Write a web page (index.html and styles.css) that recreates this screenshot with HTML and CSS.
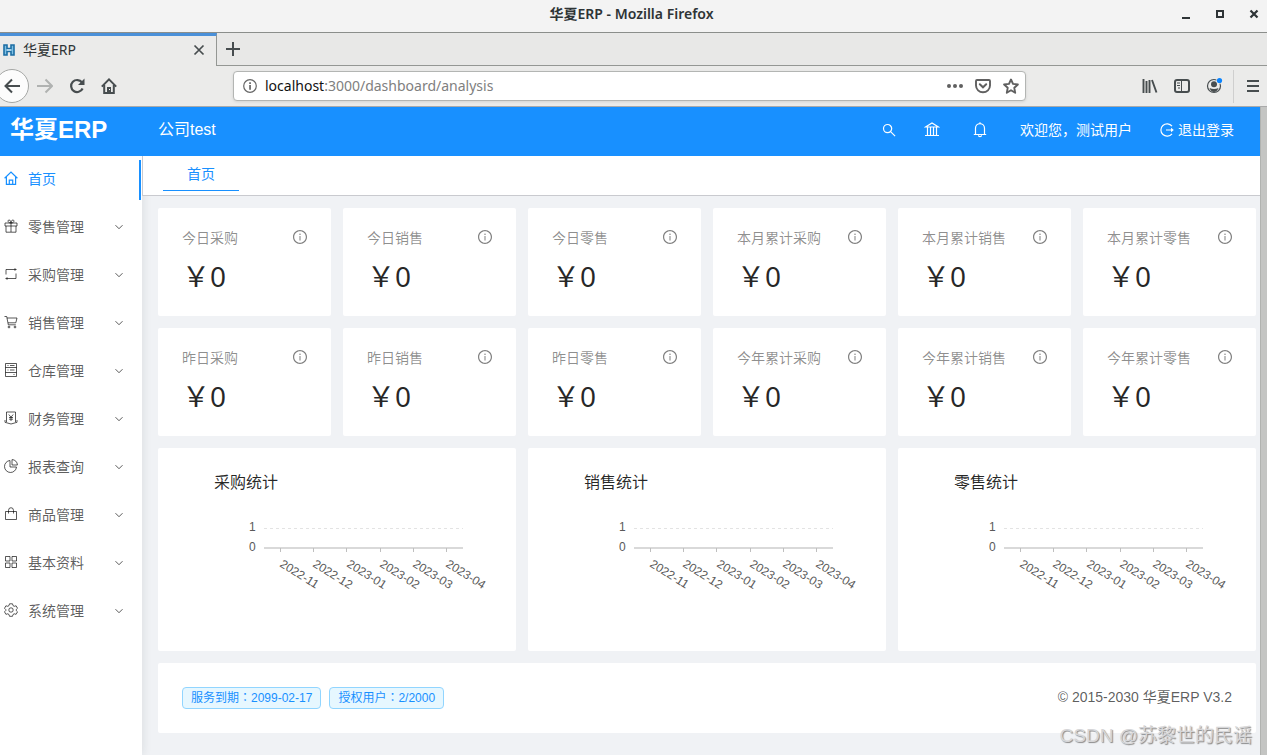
FILE: index.html
```html
<!DOCTYPE html>
<html lang="zh-CN">
<head>
<meta charset="utf-8">
<meta name="viewport" content="width=device-width, initial-scale=1">
<title>华夏ERP</title>
<link rel="stylesheet" href="styles.css">
</head>
<body>
<svg class="defs" aria-hidden="true">
  <symbol id="i-info" viewBox="64 64 896 896"><path fill="currentColor" d="M512 64C264.6 64 64 264.6 64 512s200.600 448 448 448 448-200.600 448-448S759.400 64 512 64zm0 820c-205.400 0-372-166.600-372-372s166.600-372 372-372 372 166.600 372 372-166.600 372-372 372z"/><path fill="currentColor" d="M464 336a48 48 0 1 0 96 0 48 48 0 1 0-96 0zm72 112h-48c-4.400 0-8 3.600-8 8v272c0 4.400 3.600 8 8 8h48c4.400 0 8-3.600 8-8V456c0-4.400-3.600-8-8-8z"/></symbol>
  <symbol id="i-down" viewBox="0 0 10 10"><path class="line" d="M1.500 3.200 5 6.700 8.500 3.200"/></symbol>
</svg>

<header class="titlebar">
  <span class="titlebar-text">华夏ERP - Mozilla Firefox</span>
  <div class="window-buttons">
    <button aria-label="Minimize"><svg width="10" height="10" viewBox="0 0 10 10"><path d="M1 8h8v2H1z" fill="#2e3436"/></svg></button>
    <button aria-label="Maximize"><svg width="10" height="10" viewBox="0 0 10 10"><path d="M2 2h6v6H2z" fill="none" stroke="#2e3436" stroke-width="2"/></svg></button>
    <button aria-label="Close"><svg width="10" height="10" viewBox="0 0 10 10"><path d="m1.500 1.500 7 7m0-7-7 7" stroke="#2e3436" stroke-width="2.200"/></svg></button>
  </div>
</header>

<div class="tabstrip">
  <div class="browser-tab">
    <svg width="12" height="12" viewBox="0 0 12 12"><path d="M1 1h3v3.500h4V1h3v10H8V7.500H4V11H1z" fill="#7fc0e4" stroke="#1c6ea4" stroke-width="1.600"/><path d="M4 6h4" stroke="#e8f4fb"/></svg>
    <span class="browser-tab-name">华夏ERP</span>
    <button aria-label="Close tab"><svg width="12" height="12" viewBox="0 0 12 12"><path d="m1.500 1.500 9 9m0-9-9 9" stroke="#474d4f" stroke-width="1.700"/></svg></button>
  </div>
  <button class="new-tab" aria-label="New tab"><svg width="14" height="14" viewBox="0 0 14 14"><path d="M7 0v14M0 7h14" stroke="#474d4f" stroke-width="2"/></svg></button>
</div>

<nav class="toolbar">
  <button class="back" aria-label="Back"><svg width="18" height="16" viewBox="0 0 18 16"><path d="M17 8H3M9 1.500 2.500 8 9 14.500" fill="none" stroke="#474d4f" stroke-width="2"/></svg></button>
  <button class="tool" aria-label="Forward"><svg width="16" height="16" viewBox="0 0 16 16"><path d="M0 8h14M8.500 1.500 15 8l-6.500 6.500" fill="none" stroke="#b0b2b1" stroke-width="2"/></svg></button>
  <button class="tool" aria-label="Reload"><svg width="16" height="16" viewBox="0 0 16 16"><path d="M13.600 10.500A6 6 0 1 1 13 4.500" fill="none" stroke="#474d4f" stroke-width="2.200"/><path d="M15.500 0.500v6.500H9z" fill="#474d4f"/></svg></button>
  <button class="tool" aria-label="Home"><svg width="16" height="16" viewBox="0 0 16 16"><path d="M.8 8.600 8 1.400l7.200 7.200" fill="none" stroke="#474d4f" stroke-width="2"/><path d="M3.200 7v7.900h9.600V7" fill="none" stroke="#474d4f" stroke-width="2"/><path d="M6 9h4v6H6z" fill="#474d4f"/><path d="M8 11h1v1H8z" fill="#fff"/></svg></button>
  <div class="urlbar">
    <svg width="14" height="14" viewBox="0 0 14 14"><circle cx="7" cy="7" r="6.300" fill="none" stroke="#666" stroke-width="1.200"/><path d="M6.200 3.200h1.700v1.700H6.200zM6.200 6h1.700v4.800H6.200z" fill="#666"/></svg>
    <span class="url"><b>localhost</b>:3000/dashboard/analysis</span>
    <button aria-label="Page actions"><svg width="16" height="16" viewBox="0 0 16 16"><g fill="#606060"><circle cx="2" cy="8" r="2"/><circle cx="8" cy="8" r="2"/><circle cx="14" cy="8" r="2"/></g></svg></button>
    <button aria-label="Save to Pocket"><svg width="16" height="16" viewBox="0 0 16 16"><path d="M2 2h12q1 0 1 1v4.500a7 6.800 0 0 1-14 0V3q0-1 1-1z" fill="none" stroke="#606060" stroke-width="1.900"/><path d="m4.800 6.300 3.200 3 3.200-3" fill="none" stroke="#606060" stroke-width="2" stroke-linecap="round"/></svg></button>
    <button aria-label="Bookmark"><svg width="16" height="16" viewBox="0 0 16 16"><path d="m8 1.500 2 4.400 4.900.6-3.600 3.300.9 5L8 12.300l-4.200 2.500.9-5L1.100 6.500 6 5.900z" fill="none" stroke="#606060" stroke-width="1.900" stroke-linejoin="round"/></svg></button>
  </div>
  <button class="tool" aria-label="Library"><svg width="16" height="16" viewBox="0 0 16 16"><path d="M1.500 1v14M4.500 3v12M7.500 2v13M10 2l4.500 12.500" stroke="#474d4f" stroke-width="1.900"/></svg></button>
  <button class="tool" aria-label="Sidebar"><svg width="16" height="16" viewBox="0 0 16 16"><rect x="1" y="2" width="14" height="12" rx="2" fill="none" stroke="#474d4f" stroke-width="2"/><path d="M7.500 2v12M3 5h3M3 7.500h3M4 10h2" stroke="#474d4f"/></svg></button>
  <button class="tool" aria-label="Account"><svg width="18" height="18" viewBox="0 0 18 18"><circle cx="9" cy="9" r="6.500" fill="none" stroke="#474d4f" stroke-width="1.200"/><circle cx="9" cy="7.200" r="3" fill="#474d4f"/><path d="M4.500 11q4.500 2 9 0-1.500 4-4.500 4t-4.500-4z" fill="#474d4f"/><circle cx="14.500" cy="3.500" r="3.200" fill="#ebebea"/><circle cx="14.500" cy="3.500" r="2.600" fill="#0a84ff"/></svg></button>
  <span class="tool-divider"></span>
  <button class="menu-button" aria-label="Menu"><svg width="12" height="12" viewBox="0 0 12 12"><path d="M0 1h12M0 6h12M0 11h12" stroke="#474d4f" stroke-width="2"/></svg></button>
</nav>

<div class="viewport">
  <div class="app">
    <header class="app-header">
      <h1>华夏ERP</h1>
      <span class="company">公司test</span>
      <div class="header-actions">
        <button aria-label="搜索"><svg width="14" height="14" viewBox="0 0 14 14"><circle class="line" cx="5.600" cy="5.600" r="4.100"/><path class="line" d="m8.600 8.600 4.500 4.500"/></svg></button>
        <button aria-label="机构"><svg width="16" height="16" viewBox="0 0 16 16"><path class="line" d="M1.500 5 8 1l6.500 4zM3.500 5v8M6.500 5v8M9.500 5v8M12.500 5v8M1 13.500h14"/></svg></button>
        <button aria-label="通知"><svg width="24" height="16" viewBox="0 0 24 16"><path class="line" d="M12 .2v1.300M7.500 12.500V6.300a4.500 4.700 0 0 1 9 0v6.200M5.800 12.500h12.400M10.500 13.200a1.500 1.500 0 0 0 3 0"/></svg></button>
        <span>欢迎您，测试用户</span>
        <a href="#logout"><svg width="14" height="14" viewBox="0 0 14 14"><path class="line" d="M12 3.200A6.200 6.200 0 1 0 12 10.800M6 7h6"/><path d="M11 4.800 13.800 7 11 9.200z" fill="currentColor"/></svg>退出登录</a>
      </div>
    </header>

    <div class="app-body">
      <aside class="sidebar">
        <a class="item active" href="#home"><svg class="item-icon" viewBox="0 0 14 14"><path class="line" d="M.6 7.200 7 1l6.400 6.200M2.400 6v7.300h9.200V6M5.300 13V9.200h3.400V13"/></svg><span>首页</span></a>
        <a class="item" href="#retail"><svg class="item-icon" viewBox="0 0 14 14"><path class="line" d="M1 4h12v3H1zM2 7v6.200h10V7M7 4v9M7 4C3.500 4 3.500 1 5 1s2 1.500 2 3c0-1.500.5-3 2-3s1.500 3-2 3"/></svg><span>零售管理</span><svg class="arrow"><use href="#i-down"/></svg></a>
        <a class="item" href="#purchase"><svg class="item-icon" viewBox="0 0 14 14"><path class="line" d="M2 7.500v-5h9.500M12 6.500v5H2.500"/><path fill="currentColor" d="m10.500 1 2.500 1.500L10.500 4zM3.500 10v3L1 11.500z"/></svg><span>采购管理</span><svg class="arrow"><use href="#i-down"/></svg></a>
        <a class="item" href="#sale"><svg class="item-icon" viewBox="0 0 14 14"><path class="line" d="M.5 1.500h2.200l1.600 8.300h7.500M3 3h10l-1.200 4.800H4"/><circle class="line" cx="5" cy="12" r=".9"/><circle class="line" cx="11" cy="12" r=".9"/></svg><span>销售管理</span><svg class="arrow"><use href="#i-down"/></svg></a>
        <a class="item" href="#stock"><svg class="item-icon" viewBox="0 0 14 14"><path class="line" d="M1.500.5h11v13h-11zM1.500 4.500h11M1.500 9.500h11M6 2.500h4.500M6 7h4.500M3.500 2.500h1M3.500 7h1M9.500 11.500h1"/></svg><span>仓库管理</span><svg class="arrow"><use href="#i-down"/></svg></a>
        <a class="item" href="#finance"><svg class="item-icon" viewBox="0 0 14 14"><path class="line" d="M2.500 11V1h9v10M1 9v2.300L7 13l6-1.700V9M4.800 3.500 7 6.200l2.200-2.700M7 6.200V10M5 6.500h4M5 8.200h4"/></svg><span>财务管理</span><svg class="arrow"><use href="#i-down"/></svg></a>
        <a class="item" href="#report"><svg class="item-icon" viewBox="0 0 14 14"><path class="line" d="M6 1.500a6 6 0 1 0 6.500 6.500H6zM8 .6V6h5.400A5.400 5.400 0 0 0 8 .6z"/></svg><span>报表查询</span><svg class="arrow"><use href="#i-down"/></svg></a>
        <a class="item" href="#goods"><svg class="item-icon" viewBox="0 0 14 14"><path class="line" d="M1.500 4.500h11v8h-11zM4.500 6.500V3.500a2.500 2.800 0 0 1 5 0v3"/></svg><span>商品管理</span><svg class="arrow"><use href="#i-down"/></svg></a>
        <a class="item" href="#basic"><svg class="item-icon" viewBox="0 0 14 14"><path class="line" d="M1.500 1.500H6V6H1.500zM8 1.500h4.500V6H8zM1.500 8H6v4.500H1.500zM8 8h4.500v4.500H8z"/></svg><span>基本资料</span><svg class="arrow"><use href="#i-down"/></svg></a>
        <a class="item" href="#system"><svg class="item-icon" viewBox="0 0 14 14"><path class="line" d="M5.500.8h3l.5 1.800 1.200.7 1.900-.5 1.400 2.500L12.200 6.600v.9l1.300 1.300-1.400 2.500-1.900-.5-1.200.7-.5 1.800h-3L5 11.500l-1.200-.7-1.900.5L.5 8.800l1.300-1.300v-.9L.5 5.300l1.400-2.500 1.900.5L5 2.600z"/><circle class="line" cx="7" cy="7" r="2.200"/></svg><span>系统管理</span><svg class="arrow"><use href="#i-down"/></svg></a>
      </aside>

      <div class="content">
        <nav class="page-tabs"><a href="#home">首页</a></nav>
        <main>
          <section class="stats">
            <article class="card stat"><h2>今日采购</h2><svg class="info"><use href="#i-info"/></svg><p>￥0</p></article>
            <article class="card stat"><h2>今日销售</h2><svg class="info"><use href="#i-info"/></svg><p>￥0</p></article>
            <article class="card stat"><h2>今日零售</h2><svg class="info"><use href="#i-info"/></svg><p>￥0</p></article>
            <article class="card stat"><h2>本月累计采购</h2><svg class="info"><use href="#i-info"/></svg><p>￥0</p></article>
            <article class="card stat"><h2>本月累计销售</h2><svg class="info"><use href="#i-info"/></svg><p>￥0</p></article>
            <article class="card stat"><h2>本月累计零售</h2><svg class="info"><use href="#i-info"/></svg><p>￥0</p></article>
            <article class="card stat"><h2>昨日采购</h2><svg class="info"><use href="#i-info"/></svg><p>￥0</p></article>
            <article class="card stat"><h2>昨日销售</h2><svg class="info"><use href="#i-info"/></svg><p>￥0</p></article>
            <article class="card stat"><h2>昨日零售</h2><svg class="info"><use href="#i-info"/></svg><p>￥0</p></article>
            <article class="card stat"><h2>今年累计采购</h2><svg class="info"><use href="#i-info"/></svg><p>￥0</p></article>
            <article class="card stat"><h2>今年累计销售</h2><svg class="info"><use href="#i-info"/></svg><p>￥0</p></article>
            <article class="card stat"><h2>今年累计零售</h2><svg class="info"><use href="#i-info"/></svg><p>￥0</p></article>
          </section>

          <section class="charts">
            <article class="card chart">
              <h2>采购统计</h2>
              <svg viewBox="0 0 310 119">
                <path class="grid" d="M82 20.500h199"/><path class="axis" d="M82 40h199"/>
                <path class="tick" d="M98.500 40v4M131.500 40v4M164.500 40v4M198.500 40v4M231.500 40v4M264.500 40v4"/>
                <text x="67" y="23">1</text><text x="67" y="43">0</text>
                <text transform="translate(97 58) rotate(32)">2022-11</text><text transform="translate(130 58) rotate(32)">2022-12</text><text transform="translate(164 58) rotate(32)">2023-01</text><text transform="translate(197 58) rotate(32)">2023-02</text><text transform="translate(230 58) rotate(32)">2023-03</text><text transform="translate(263 58) rotate(32)">2023-04</text>
              </svg>
            </article>
            <article class="card chart">
              <h2>销售统计</h2>
              <svg viewBox="0 0 310 119">
                <path class="grid" d="M82 20.500h199"/><path class="axis" d="M82 40h199"/>
                <path class="tick" d="M98.500 40v4M131.500 40v4M164.500 40v4M198.500 40v4M231.500 40v4M264.500 40v4"/>
                <text x="67" y="23">1</text><text x="67" y="43">0</text>
                <text transform="translate(97 58) rotate(32)">2022-11</text><text transform="translate(130 58) rotate(32)">2022-12</text><text transform="translate(164 58) rotate(32)">2023-01</text><text transform="translate(197 58) rotate(32)">2023-02</text><text transform="translate(230 58) rotate(32)">2023-03</text><text transform="translate(263 58) rotate(32)">2023-04</text>
              </svg>
            </article>
            <article class="card chart">
              <h2>零售统计</h2>
              <svg viewBox="0 0 310 119">
                <path class="grid" d="M82 20.500h199"/><path class="axis" d="M82 40h199"/>
                <path class="tick" d="M98.500 40v4M131.500 40v4M164.500 40v4M198.500 40v4M231.500 40v4M264.500 40v4"/>
                <text x="67" y="23">1</text><text x="67" y="43">0</text>
                <text transform="translate(97 58) rotate(32)">2022-11</text><text transform="translate(130 58) rotate(32)">2022-12</text><text transform="translate(164 58) rotate(32)">2023-01</text><text transform="translate(197 58) rotate(32)">2023-02</text><text transform="translate(230 58) rotate(32)">2023-03</text><text transform="translate(263 58) rotate(32)">2023-04</text>
              </svg>
            </article>
          </section>

          <footer class="card license">
            <span class="tag" lang="zh-TW">服务到期：2099-02-17</span>
            <span class="tag" lang="zh-TW">授权用户：2/2000</span>
            <span class="copyright">© 2015-2030 华夏ERP V3.2</span>
          </footer>
        </main>
      </div>
    </div>
  </div>
  <div class="scroll-track"></div>
</div>
<div class="watermark">CSDN @苏黎世的民谣</div>
</body>
</html>
```
FILE: styles.css
```css
* { box-sizing: border-box; }

body {
  display: flex;
  flex-direction: column;
  min-height: 100vh;
  margin: 0;
  overflow: hidden;
  color: rgba(0, 0, 0, .65);
  background: #f0f2f5;
  font: 14px/22px "Liberation Sans", "Noto Sans CJK SC", sans-serif;
}

h1, h2, p { margin: 0; font-weight: 400; }
a { color: inherit; text-decoration: none; }
svg { display: block; flex: none; }
.defs { position: absolute; width: 0; height: 0; }
.line { fill: none; stroke: currentColor; stroke-width: 1; }

button {
  display: flex;
  align-items: center;
  justify-content: center;
  padding: 0;
  color: inherit;
  background: none;
  border: 0;
}

/* Browser window */
.titlebar {
  display: grid;
  grid-template-columns: 1fr auto 1fr;
  align-items: center;
  height: 33px;
  padding: 0 8px 4px 4px;
  color: #2e3436;
  background: #f3f3f3;
  border-bottom: 1px solid #8b8e8b;
  font: 600 14px/20px "Noto Sans", "Noto Sans CJK SC", sans-serif;
}
.titlebar-text { grid-column: 2; }
.window-buttons { display: flex; justify-content: flex-end; gap: 24px; }

.tabstrip {
  display: flex;
  height: 33px;
  background: #e8e8e7;
  border-bottom: 1px solid #949794;
}
.browser-tab {
  display: flex;
  align-items: center;
  gap: 8px;
  width: 217px;
  height: 33px;
  padding: 0 11px 2px 3px;
  color: #2e3436;
  background: #ebebea;
  border-top: 3px solid #4a90d9;
  border-right: 1px solid #949794;
  font: 14px/20px "Noto Sans", "Noto Sans CJK SC", sans-serif;
}
.browser-tab-name { flex: 1; }
.new-tab { width: 32px; }

.toolbar {
  display: flex;
  align-items: center;
  height: 41px;
  background: #ebebea;
  border-bottom: 1px solid #aaa;
}
.back {
  width: 34px;
  height: 34px;
  margin-left: -5px;
  background: #fcfcfc;
  border: 1px solid #a5a7a5;
  border-radius: 50%;
}
.tool { width: 32px; height: 32px; }
.urlbar {
  display: flex;
  flex: 1;
  align-items: center;
  gap: 12px;
  height: 30px;
  margin: 0 108px;
  padding: 0 6px 0 9px;
  color: #808080;
  background: #fff;
  border: 1px solid #b3b5b3;
  border-radius: 4px;
  box-shadow: 0 1px 3px rgba(0, 0, 0, .1);
  font: 14px/20px "Noto Sans", sans-serif;
}
.urlbar > svg { margin-right: -4px; }
.url { flex: 1; }
.url b { color: #111; font-weight: 400; }
.tool-divider { width: 1px; height: 33px; margin: 0 5px 0 3px; background: #cfcfcf; }
.menu-button { width: 28px; height: 32px; }

/* Application */
.viewport { display: flex; flex: 1; }
.app { display: flex; flex: 1; flex-direction: column; min-width: 0; }
.scroll-track { width: 7px; background: #c4c5c3; border-left: 1px solid #b1b3b0; }

.app-header {
  position: relative;
  display: flex;
  align-items: center;
  height: 49px;
  padding: 0 26px 4px 10px;
  color: #fff;
  background: #1890ff;
}
.app-header h1 { width: 148px; font-size: 24px; font-weight: 700; line-height: 32px; }
.app-header .line { stroke-width: 1.2; }
.company { font-size: 16px; }
.header-actions { display: flex; align-items: center; gap: 28px; margin-left: auto; }
.header-actions a { display: flex; align-items: center; gap: 4px; }

.app-body { display: flex; flex: 1; }
.sidebar {
  width: 142px;
  padding-top: 4px;
  background: #fff;
  box-shadow: 2px 0 8px rgba(29, 35, 41, .08);
}
.item {
  display: flex;
  align-items: center;
  gap: 10px;
  height: 40px;
  margin: 0 1px 8px 0;
  padding: 0 17px 2px 4px;
}
.item-icon { width: 14px; height: 14px; margin-bottom: 2px; }
.item span { flex: 1; }
.item.active { color: #1890ff; border-right: 2px solid #1890ff; }
.item.active .line { stroke-width: 1.2; }
.arrow { width: 10px; height: 10px; }

.content { flex: 1; min-width: 0; }
.page-tabs {
  position: relative;
  display: flex;
  align-items: flex-start;
  height: 40px;
  padding-left: 20px;
  background: #fff;
  border-bottom: 1px solid #c9cacf;
  border-left: 1px solid #c9cacf;
}
.page-tabs a {
  padding: 7px 24px 5px;
  color: #1890ff;
  border-bottom: 1px solid #1890ff;
}

main { display: grid; gap: 12px; padding: 12px 4px 22px 16px; }
.stats { display: grid; grid-template-columns: repeat(6, 1fr); gap: 12px; }
.charts { display: grid; grid-template-columns: repeat(3, 1fr); gap: 12px; }
.card { background: #fff; border-radius: 2px; }

.stat {
  display: grid;
  grid-template-columns: 1fr auto;
  align-content: start;
  gap: 8px;
  height: 108px;
  padding: 19px 24px;
}
.stat h2 { color: rgba(0, 0, 0, .45); font-size: 14px; line-height: 22px; }
.info { width: 14px; height: 14px; margin-top: 3px; color: rgba(0, 0, 0, .5); }
.stat p {
  grid-column: 1 / -1;
  color: rgba(0, 0, 0, .85);
  font: 28px/38px "Noto Sans", "Noto Sans CJK SC", sans-serif;
}

.chart { padding: 24px; }
.chart h2 { padding-left: 32px; color: rgba(0, 0, 0, .85); font-size: 16px; line-height: 22px; }
.chart svg { width: 100%; margin-top: 14px; overflow: visible; }
.chart text { fill: #595959; font-size: 12px; }
.grid { stroke: #e3e3e3; stroke-dasharray: 3 3; }
.axis { stroke: #d9d9d9; stroke-width: 2; }
.tick { stroke: #bfbfbf; }

.license { display: flex; align-items: flex-start; gap: 8px; height: 70px; padding: 24px; }
.tag {
  padding: 0 8px;
  color: #1890ff;
  background: #e6f7ff;
  border: 1px solid #91d5ff;
  border-radius: 4px;
  font: 12px/20px "Liberation Sans", "Noto Sans CJK TC", sans-serif;
}
.copyright { margin-left: auto; line-height: 20px; }

.watermark {
  position: absolute;
  right: 15px;
  bottom: 5px;
  color: #d6d6d8;
  font-size: 19px;
  line-height: 28px;
  text-shadow: 1px 1px 1px #888;
}
```
